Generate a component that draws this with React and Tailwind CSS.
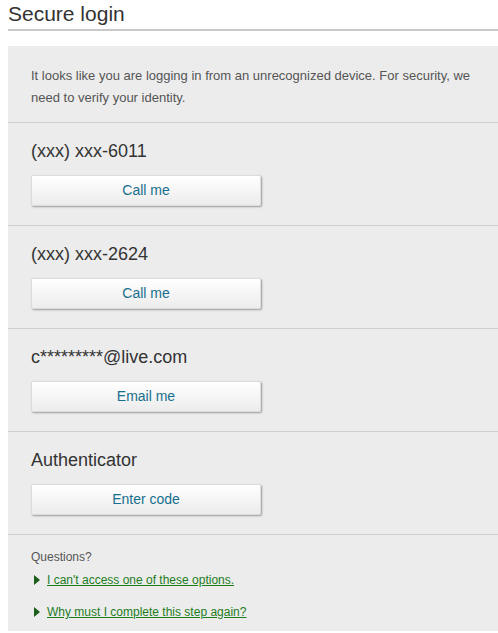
import React from "react";

const options = [
  { label: "(xxx) xxx-6011", action: "Call me" },
  { label: "(xxx) xxx-2624", action: "Call me" },
  { label: "c*********@live.com", action: "Email me" },
  { label: "Authenticator", action: "Enter code" },
];

const links = ["I can't access one of these options.", "Why must I complete this step again?"];

const Option = ({ label, action }) => (
  <div className="border-t border-[#cfcfcf] pl-[23px] pt-[16px] pb-[19px]">
    <div className="text-[18px] leading-[24px] text-[#333]">{label}</div>
    <button className="mt-[12px] block h-[31px] w-[230px] rounded-[2px] border border-[#dcdcdc] bg-gradient-to-b from-white to-[#ececec] text-[14px] text-[#176f8e] shadow-[1px_1px_2px_rgba(0,0,0,0.35)]">
      {action}
    </button>
  </div>
);

const App = () => {
  return (
    <div className="min-h-[633px] bg-white pl-[8px] font-['Liberation_Sans',Arial,sans-serif]">
      <h1 className="pt-[1px] text-[21px] leading-[26px] text-[#333]">Secure login</h1>
      <div className="mt-[2px] h-[2px] bg-[#c8c8c8]" />
      <div className="mt-[15px] bg-[#ececec]">
        <p className="pl-[23px] pr-[8px] pt-[19px] pb-[13px] text-[13px] leading-[22px] text-[#555]">
          It looks like you are logging in from an unrecognized device. For security, we need to verify your identity.
        </p>
        {options.map((o, i) => (
          <Option key={i} label={o.label} action={o.action} />
        ))}
        <div className="border-t border-[#cfcfcf] pl-[23px] pt-[14px] pb-[11px] text-[12px] leading-[16px]">
          <div className="text-[#555]">Questions?</div>
          <div className="mt-[7px] flex flex-col gap-[16px]">
            {links.map((l, i) => (
              <div key={i} className="flex items-center">
                <svg width="6" height="10" viewBox="0 0 6 10" className="ml-[3px] mr-[7px]">
                  <path d="M0 0 L6 5 L0 10 Z" fill="#1c5e1c" />
                </svg>
                <a href="#" className="text-[#1d7d1d] underline">
                  {l}
                </a>
              </div>
            ))}
          </div>
        </div>
      </div>
    </div>
  );
};

export default App;
